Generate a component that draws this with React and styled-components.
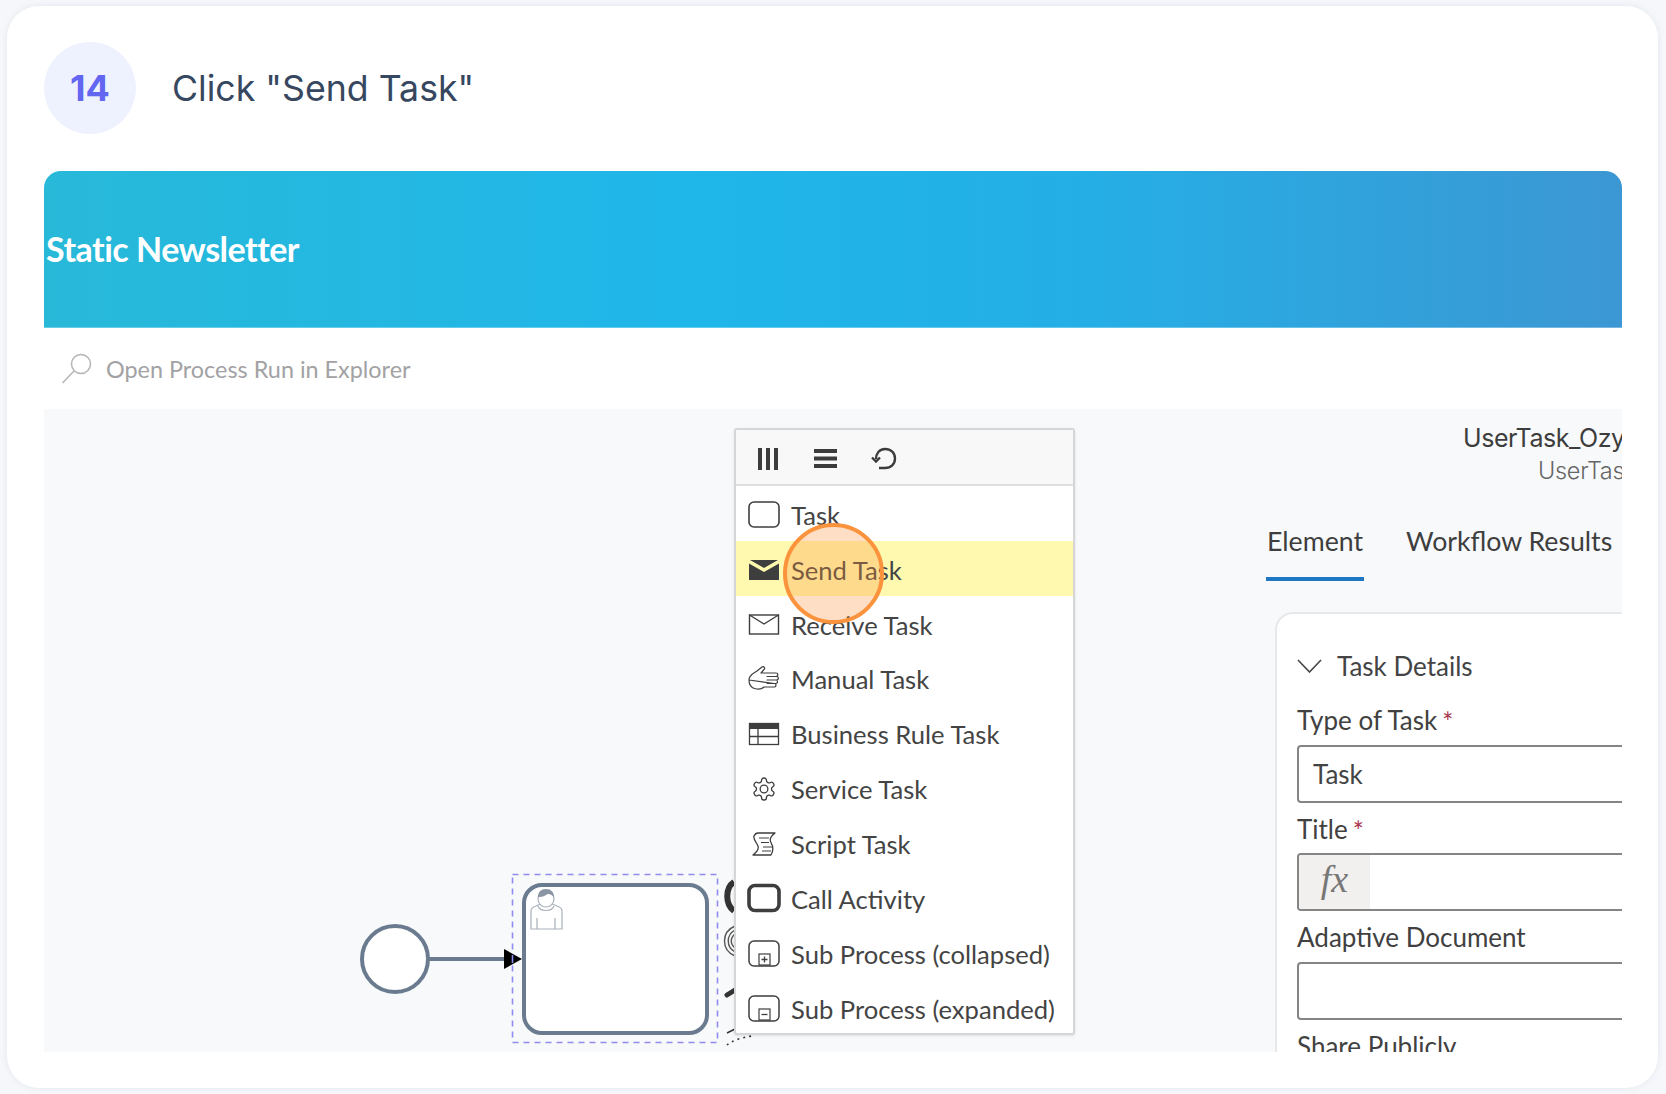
import React from "react";
import styled, { createGlobalStyle } from "styled-components";

const GlobalStyle = createGlobalStyle`
  html, body { margin: 0; padding: 0; background: #f5f7fa; }
  body { font-family: "Lato", "Liberation Sans", sans-serif; }
`;

const Page = styled.div`
  width: 1666px;
  height: 1094px;
  box-sizing: border-box;
  padding: 6px 8px 6px 7px;
  overflow: hidden;
`;

const Card = styled.section`
  height: 1082px;
  box-sizing: border-box;
  padding: 36px 36px 36px 37px;
  background: #fff;
  border-radius: 32px;
  box-shadow: 0 0 6px rgba(150, 160, 175, 0.18);
`;

const StepHeader = styled.header`
  display: flex;
  align-items: center;
  gap: 36px;
  height: 92px;
  margin-bottom: 37px;
`;

const StepNumber = styled.div`
  width: 92px;
  height: 92px;
  border-radius: 50%;
  background: #eef2ff;
  color: #6366f1;
  display: flex;
  align-items: center;
  justify-content: center;
  font: 700 36px "Inter", sans-serif;
`;

const StepTitle = styled.h1`
  margin: 0;
  font: 400 35.7px "Inter", sans-serif;
  color: #374760;
`;

const Shot = styled.div`
  width: 1578px;
  height: 881px;
  border-radius: 17px 17px 0 0;
  overflow: hidden;
  background: #f8f9fb;
`;

const Banner = styled.div`
  height: 157px;
  background: linear-gradient(90deg, #28b9d9 0%, #1fb6ea 42%, #24afe6 65%, #3c97d3 100%);
  border-bottom: 1px solid rgba(255, 255, 255, 0.3);
  display: flex;
  align-items: center;
  padding: 0 0 2px 2px;
  box-sizing: border-box;
`;

const BannerTitle = styled.div`
  color: #fff;
  font: 700 34px "Lato", sans-serif;
  letter-spacing: -0.5px;
`;

const SearchBar = styled.div`
  height: 81px;
  background: #fff;
  display: flex;
  align-items: center;
  gap: 14px;
  padding: 0 0 0 17px;
  color: #a2a2a4;
  font-size: 23.4px;
`;

const Canvas = styled.div`
  height: 643px;
  display: flex;
`;

const DiagramPane = styled.div`
  position: relative;
  width: 1222px;
  flex: none;
`;

const DiagramSvg = styled.svg`
  display: block;
  width: 1222px;
  height: 643px;
`;

const Popup = styled.div`
  position: absolute;
  left: 690px;
  top: 19px;
  width: 341px;
  height: 607px;
  box-sizing: border-box;
  background: #fff;
  border: 2px solid #d6d6d6;
  border-radius: 3px;
  box-shadow: 0 1px 3px rgba(0, 0, 0, 0.1);
  overflow: hidden;
`;

const PopupTools = styled.div`
  height: 56px;
  box-sizing: border-box;
  padding-top: 3px;
  background: #f8f8f8;
  border-bottom: 2px solid #dedede;
  display: flex;
  align-items: center;
`;

const ToolIcon = styled.svg`
  display: block;
  flex: none;
  color: #3c3c3c;
  margin-left: ${(p) => p.$left}px;
`;

const PopupRow = styled.div`
  height: 54.85px;
  box-sizing: border-box;
  padding: 3px 0 0 11px;
  display: flex;
  align-items: center;
  gap: 10px;
  font-size: 25.6px;
  color: #444;
  background: ${(p) => (p.$active ? "#fff9b0" : "transparent")};
`;

const RowIcon = styled.svg`
  display: block;
  flex: none;
  width: 34px;
  height: 34px;
  color: #3e3e3e;
`;

const ClickRing = styled.div`
  position: absolute;
  left: 47px;
  top: 93px;
  width: 101px;
  height: 101px;
  box-sizing: border-box;
  border-radius: 50%;
  border: 4px solid #fb923c;
  background: rgba(251, 146, 60, 0.3);
`;

const SidePane = styled.div`
  flex: 1;
  min-width: 0;
  overflow: hidden;
  padding-top: 13px;
`;

const ElementName = styled.div`
  margin-left: ${(p) => p.$left}px;
  white-space: nowrap;
  letter-spacing: ${(p) => (p.$sub ? "-0.3px" : "-0.45px")};
  font: ${(p) => (p.$sub ? "300 23.5px/32px" : "400 25px/33px")} "Inter", sans-serif;
  color: ${(p) => (p.$sub ? "#666" : "#3d3d3d")};
`;

const Tabs = styled.div`
  display: flex;
  gap: 41px;
  margin-top: 19px;
  height: 75px;
  box-sizing: border-box;
`;

const Tab = styled.div`
  height: 75px;
  box-sizing: border-box;
  padding: 18px 1px 0;
  font-size: 26.7px;
  line-height: 34px;
  color: #3e3e3e;
  white-space: nowrap;
  border-bottom: ${(p) => (p.$active ? "4px solid #1f77c4" : "none")};
`;

const DetailsCard = styled.div`
  margin: 31px 0 0 9px;
  width: 700px;
  height: 460px;
  box-sizing: border-box;
  padding: 23px 0 0 20px;
  background: #fff;
  border: 2px solid #e7e8ea;
  border-radius: 18px 0 0 0;
`;

const DetailsHead = styled.div`
  height: 57px;
  display: flex;
  align-items: center;
  gap: 15px;
  font-size: 26px;
  color: #444;
`;

const FieldLabel = styled.div`
  height: 50.6px;
  line-height: 53px;
  font-size: 26px;
  color: #414141;
  white-space: nowrap;
`;

const Required = styled.span`
  color: #a8324a;
  font-size: 26px;
  margin-left: 5px;
  line-height: 0;
  vertical-align: -2px;
`;

const FieldBox = styled.div`
  height: 58px;
  box-sizing: border-box;
  border: 2px solid #858585;
  border-radius: 4px;
  background: #fff;
  display: flex;
  align-items: center;
  padding-left: ${(p) => (p.$pad ? 14 : 0)}px;
  font-size: 26px;
  color: #444;
  overflow: hidden;
`;

const FxAddon = styled.div`
  width: 71px;
  height: 100%;
  box-sizing: border-box;
  padding-bottom: 6px;
  background: #f1f0ee;
  display: flex;
  align-items: center;
  justify-content: center;
  font: italic 38px "Liberation Serif", serif;
  color: #777;
`;

const Ico = {
  task: (
    <RowIcon viewBox="0 0 34 34" fill="none" stroke="currentColor" strokeWidth="1.6">
      <rect x="2" y="4" width="30" height="25" rx="5" />
    </RowIcon>
  ),
  send: (
    <RowIcon viewBox="0 0 34 34">
      <path d="M2 10.5 17 19 32 10.5V27H2Z" fill="currentColor" />
      <path d="M3 7H31L17 15Z" fill="currentColor" />
    </RowIcon>
  ),
  receive: (
    <RowIcon viewBox="0 0 34 34" fill="none" stroke="currentColor" strokeWidth="1.4">
      <rect x="2.5" y="7" width="29" height="19" />
      <path d="M2.5 7 17 16 31.5 7" />
    </RowIcon>
  ),
  manual: (
    <RowIcon viewBox="0 0 34 34" fill="none" stroke="currentColor" strokeWidth="1.2" strokeLinejoin="round" strokeLinecap="round">
      <path d="M2 18C2 13 7 11 10 9L15 5C17 4 18.500 6 17 7.500L14 11H29C31.500 11 31.500 14.500 29 14.500H20M29.500 14.500C32 14.500 32 18 29.500 18H20M29 18C31 18 31 21.500 29 21.500H20M27.500 21.500C29.500 21.500 29.500 25 27.500 25H17C14 28 2 29 2 18Z" />
    </RowIcon>
  ),
  rule: (
    <RowIcon viewBox="0 0 34 34" fill="none" stroke="currentColor" strokeWidth="1.3">
      <rect x="2.500" y="6.500" width="29" height="21" />
      <rect x="2" y="6" width="30" height="6" fill="currentColor" stroke="none" />
      <path d="M2.500 19.500H31.500M11 12V27.500" />
    </RowIcon>
  ),
  service: (
    <RowIcon viewBox="-3.500 -3.500 31 31" fill="none" stroke="currentColor" strokeWidth="1.200" strokeLinejoin="round">
      <path d="M12.220 2h-.440a2 2 0 0 0-2 2v.180a2 2 0 0 1-1 1.730l-.430.250a2 2 0 0 1-2 0l-.150-.080a2 2 0 0 0-2.730.730l-.220.380a2 2 0 0 0 .730 2.730l.150.100a2 2 0 0 1 1 1.720v.510a2 2 0 0 1-1 1.740l-.150.090a2 2 0 0 0-.730 2.730l.220.380a2 2 0 0 0 2.730.730l.150-.080a2 2 0 0 1 2 0l.430.250a2 2 0 0 1 1 1.730V20a2 2 0 0 0 2 2h.440a2 2 0 0 0 2-2v-.180a2 2 0 0 1 1-1.730l.430-.250a2 2 0 0 1 2 0l.150.080a2 2 0 0 0 2.730-.730l.220-.390a2 2 0 0 0-.730-2.730l-.150-.080a2 2 0 0 1-1-1.740v-.500a2 2 0 0 1 1-1.740l.150-.090a2 2 0 0 0 .730-2.730l-.220-.380a2 2 0 0 0-2.730-.730l-.150.080a2 2 0 0 1-2 0l-.430-.250a2 2 0 0 1-1-1.730V4a2 2 0 0 0-2-2z" />
      <circle cx="12" cy="12" r="3.500" />
    </RowIcon>
  ),
  script: (
    <RowIcon viewBox="0 0 34 34" fill="none" stroke="currentColor" strokeWidth="1.300" strokeLinejoin="round">
      <path d="M11 6H28C24 9 22 12 24 15.500 26 19 27 23 24 28H6C10 25 12 22 11 19 9 15 6 12 7 9 8 7 9 6 11 6Z" />
      <path d="M12 11H22M14 15.500H22M16 20H25M15 24H24" strokeWidth="1" />
    </RowIcon>
  ),
  call: (
    <RowIcon viewBox="0 0 34 34" fill="none" stroke="currentColor" strokeWidth="3.600">
      <rect x="2" y="3.500" width="30" height="25" rx="6" />
    </RowIcon>
  ),
  collapsed: (
    <RowIcon viewBox="0 0 34 34" fill="none" stroke="currentColor" strokeWidth="1.500">
      <rect x="2" y="4" width="30" height="25" rx="5" />
      <rect x="12" y="17" width="11" height="11" strokeWidth="1.200" />
      <path d="M14.500 22.500H20.500M17.500 19.500V25.500" strokeWidth="1.300" />
    </RowIcon>
  ),
  expanded: (
    <RowIcon viewBox="0 0 34 34" fill="none" stroke="currentColor" strokeWidth="1.500">
      <rect x="2" y="4" width="30" height="25" rx="5" />
      <rect x="12" y="17" width="11" height="11" strokeWidth="1.200" />
      <path d="M14.500 22.500H20.500" strokeWidth="1.300" />
    </RowIcon>
  ),
};

const rows = [
  { id: "task", label: "Task" },
  { id: "send", label: "Send Task", active: true },
  { id: "receive", label: "Receive Task" },
  { id: "manual", label: "Manual Task" },
  { id: "rule", label: "Business Rule Task" },
  { id: "service", label: "Service Task" },
  { id: "script", label: "Script Task" },
  { id: "call", label: "Call Activity" },
  { id: "collapsed", label: "Sub Process (collapsed)" },
  { id: "expanded", label: "Sub Process (expanded)" },
];

function Diagram() {
  // viewBox uses the coordinates of the full picture
  return (
    <DiagramSvg viewBox="44 409 1222 643" fill="none">
      <circle cx="395" cy="959" r="33" fill="#fff" stroke="#6b7b8f" strokeWidth="4" />
      <path d="M428 959H506" stroke="#6b7b8f" strokeWidth="4" />
      <rect x="524" y="885" width="183" height="148" rx="18" fill="#fff" stroke="#6b7b8f" strokeWidth="4" />
      <rect x="512.500" y="874.500" width="205" height="168" stroke="#8e8cf0" strokeWidth="1.600" strokeDasharray="6 5" />
      <path d="M504 949 522 959 504 969Z" fill="#000" />
      <path d="M512.500 955V963" stroke="#8e8cf0" strokeWidth="1.600" />
      <g stroke="#a9b1bc" strokeWidth="1.200" fill="#fff">
        <path d="M531 929V911c0-3 2-4 5-5l7-3h7l7 3c3 1 5 2 5 5v18Z" />
        <circle cx="546" cy="899" r="8" />
        <path d="M538 897c0-5 3-8 8-8s8 3 8 8c-3-3-6-4-8-2-3 2-6 2-8 2Z" fill="#8a94a3" stroke="none" />
        <path d="M538 906c2 6 14 6 16 0M537 929V918M555 929V918" fill="none" />
      </g>
      <path d="M734 882C725 888 725 904 734 911" stroke="#333" strokeWidth="6" />
      <g stroke="#555" strokeWidth="1.400">
        <path d="M735 926C721 932 721 950 735 956" />
        <path d="M735 930C726 935 726 947 735 952" />
        <path d="M735 934C730 938 730 944 735 948" />
      </g>
      <path d="M727 995 735 990" stroke="#333" strokeWidth="5" strokeLinecap="round" />
      <path d="M727 1033 735 1029" stroke="#333" strokeWidth="1.500" />
      <path d="M727 1045C731 1041 740 1038 752 1036" stroke="#333" strokeWidth="1.600" strokeDasharray="2 4" />
    </DiagramSvg>
  );
}

export default function App() {
  return (
    <>
      <GlobalStyle />
      <Page>
        <Card>
          <StepHeader>
            <StepNumber>14</StepNumber>
            <StepTitle>Click "Send Task"</StepTitle>
          </StepHeader>
          <Shot>
            <Banner>
              <BannerTitle>Static Newsletter</BannerTitle>
            </Banner>
            <SearchBar>
              <svg width="31" height="31" viewBox="0 0 31 31" fill="none" stroke="#b5b5b5" strokeWidth="1.500">
                <circle cx="20" cy="11" r="9.500" />
                <path d="M13 18 1.500 30" />
              </svg>
              Open Process Run in Explorer
            </SearchBar>
            <Canvas>
              <DiagramPane>
                <Diagram />
                <Popup>
                  <PopupTools>
                    <ToolIcon $left={22} width="20" height="22" viewBox="0 0 20 22" fill="currentColor">
                      <rect x="0" y="0" width="4" height="22" />
                      <rect x="8" y="0" width="4" height="22" />
                      <rect x="16" y="0" width="4" height="22" />
                    </ToolIcon>
                    <ToolIcon $left={36} width="23" height="19" viewBox="0 0 23 19" fill="currentColor">
                      <rect y="0" width="23" height="4" />
                      <rect y="7.500" width="23" height="4" />
                      <rect y="15" width="23" height="4" />
                    </ToolIcon>
                    <ToolIcon $left={34} width="26" height="23" viewBox="0 0 26 23" fill="none" stroke="currentColor" strokeWidth="2.400">
                      <path d="M8 21H14C20 21 24 17 24 11.500 24 6 20 2 14 2 8 2 5 7 5 12" />
                      <path d="M1 10.500 5 14.500 9 10.500" />
                    </ToolIcon>
                  </PopupTools>
                  {rows.map((r) => (
                    <PopupRow key={r.id} $active={r.active}>
                      {Ico[r.id]}
                      {r.label}
                    </PopupRow>
                  ))}
                  <ClickRing />
                </Popup>
              </DiagramPane>
              <SidePane>
                <ElementName $left={197}>UserTask_Ozy</ElementName>
                <ElementName $left={272} $sub>UserTask</ElementName>
                <Tabs>
                  <Tab $active>Element</Tab>
                  <Tab>Workflow Results</Tab>
                </Tabs>
                <DetailsCard>
                  <DetailsHead>
                    <svg width="25" height="14" viewBox="0 0 25 14" fill="none" stroke="#444" strokeWidth="1.600">
                      <path d="M1 1 12.500 13 24 1" />
                    </svg>
                    Task Details
                  </DetailsHead>
                  <FieldLabel>Type of Task<Required>*</Required></FieldLabel>
                  <FieldBox $pad>Task</FieldBox>
                  <FieldLabel>Title<Required>*</Required></FieldLabel>
                  <FieldBox><FxAddon>fx</FxAddon></FieldBox>
                  <FieldLabel>Adaptive Document</FieldLabel>
                  <FieldBox />
                  <FieldLabel>Share Publicly</FieldLabel>
                </DetailsCard>
              </SidePane>
            </Canvas>
          </Shot>
        </Card>
      </Page>
    </>
  );
}
